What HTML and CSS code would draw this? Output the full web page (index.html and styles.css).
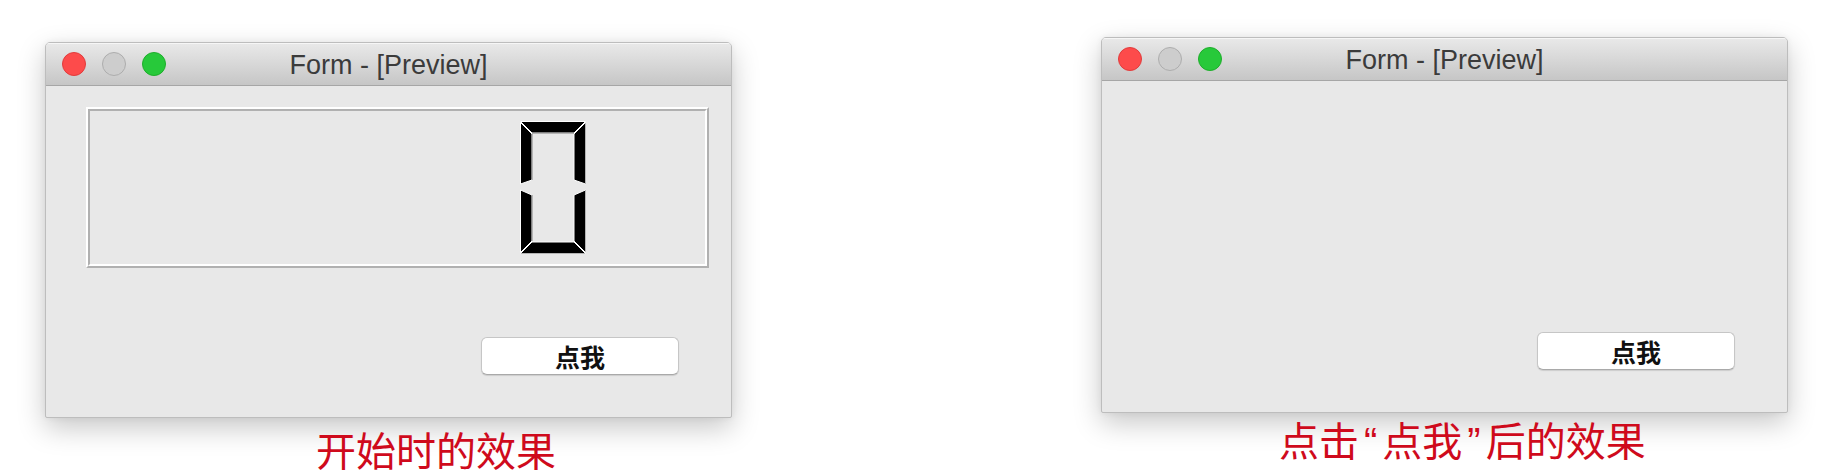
FILE: index.html
```html
<!DOCTYPE html>
<html lang="zh-CN">
<head>
<meta charset="utf-8">
<title>Form - [Preview]</title>
<link rel="stylesheet" href="styles.css">
</head>
<body>
<main class="stage">
  <section class="shot shot-start">
    <div class="window">
      <div class="titlebar">
        <div class="lights">
          <span class="light light-close"></span>
          <span class="light light-min"></span>
          <span class="light light-max"></span>
        </div>
        <div class="title">Form - [Preview]</div>
      </div>
      <div class="content">
        <div class="lcd">
          <div class="lcd-inner">
            <svg class="digit" width="66" height="133" viewBox="0 0 66 133">
              <g fill="#000" stroke="#fff" stroke-width="1" stroke-linejoin="miter">
                <polygon points="0.5,0.5 65.5,0.5 54,12 12,12"/>
                <polygon points="0.5,1.5 12,13 12,59 0.5,63"/>
                <polygon points="65.5,1.5 54,13 54,59 65.5,63"/>
                <polygon points="0.5,69 12,74 12,120 0.5,131.5"/>
                <polygon points="65.5,69 54,74 54,120 65.5,131.5"/>
                <polygon points="0.5,132.5 12,121 54,121 65.5,132.5"/>
              </g>
              <g fill="none" stroke="#b4b4b4" stroke-width="1">
                <line x1="12" y1="12.5" x2="54" y2="12.5"/>
                <line x1="12.5" y1="13" x2="12.5" y2="59"/>
                <line x1="12.5" y1="74" x2="12.5" y2="120"/>
                <line x1="65.5" y1="2" x2="65.5" y2="63"/>
                <line x1="65.5" y1="69" x2="65.5" y2="131"/>
                <line x1="1" y1="132.5" x2="65" y2="132.5"/>
              </g>
            </svg>
          </div>
        </div>
        <button class="btn" type="button">点我</button>
      </div>
    </div>
    <p class="caption">开始时的效果</p>
  </section>

  <section class="shot shot-after">
    <div class="window">
      <div class="titlebar">
        <div class="lights">
          <span class="light light-close"></span>
          <span class="light light-min"></span>
          <span class="light light-max"></span>
        </div>
        <div class="title">Form - [Preview]</div>
      </div>
      <div class="content content-empty">
        <button class="btn" type="button">点我</button>
      </div>
    </div>
    <p class="caption">点击<span class="q">“</span>点我<span class="q">”</span>后的效果</p>
  </section>
</main>
</body>
</html>
```

FILE: styles.css
```css
* { box-sizing: border-box; }

html, body {
  margin: 0;
  padding: 0;
  background: #ffffff;
}

body {
  width: 1834px;
  height: 472px;
  overflow: hidden;
  font-family: "Liberation Sans", "Noto Sans CJK SC", sans-serif;
}

.stage {
  display: flex;
  align-items: flex-start;
  padding-left: 45px;
}

.shot {
  display: flex;
  flex-direction: column;
  align-items: flex-start;
}

.shot-start { margin-top: 42px; }
.shot-after { margin-top: 37px; margin-left: 369px; }

.window {
  width: 687px;
  height: 376px;
  display: flex;
  flex-direction: column;
  background: #e8e8e8;
  border: 1px solid #bdbdbd;
  border-radius: 5px 5px 2px 2px;
  box-shadow: 0 10px 28px rgba(0, 0, 0, 0.22), 0 0 6px rgba(0, 0, 0, 0.06);
  overflow: hidden;
}

.titlebar {
  position: relative;
  height: 43px;
  flex: none;
  display: flex;
  align-items: center;
  justify-content: center;
  background: linear-gradient(#e9e9e9, #d6d6d6 55%, #c6c6c6);
  border-bottom: 1px solid #a6a6a6;
  box-shadow: inset 0 1px 0 #f6f6f6;
}

.lights {
  position: absolute;
  left: 16px;
  top: 9px;
  display: flex;
  gap: 16px;
}

.light {
  width: 24px;
  height: 24px;
  border-radius: 50%;
  display: block;
}

.light-close { background: #fd4b4b; border: 1px solid #e13c3c; }
.light-min   { background: #cdcdcd; border: 1px solid #adadad; }
.light-max   { background: #27c93a; border: 1px solid #1eae2b; }

.title {
  font-size: 27px;
  color: #3b3b3b;
  line-height: 1;
  margin-top: 2px;
}

.content {
  flex: 1;
  display: flex;
  flex-direction: column;
  align-items: flex-start;
  padding: 21px 0 0 40px;
}

.content-empty { padding-top: 251px; }

.lcd {
  width: 623px;
  height: 161px;
  border: 2px solid;
  border-color: #ffffff #b0b0b0 #b0b0b0 #ffffff;
}

.lcd-inner {
  width: 100%;
  height: 100%;
  border: 2px solid;
  border-color: #b0b0b0 #ffffff #ffffff #b0b0b0;
  padding: 10px 0 0 430px;
}

.digit { display: block; }

.btn {
  width: 198px;
  height: 38px;
  margin: 69px 0 0 395px;
  padding: 0;
  background: #ffffff;
  border: 1px solid #c6c6c6;
  border-bottom-color: #a9a9a9;
  border-radius: 6px;
  box-shadow: 0 1px 1px rgba(0, 0, 0, 0.12);
  font-family: "Noto Sans CJK SC", sans-serif;
  font-size: 25px;
  font-weight: 700;
  color: #111111;
  line-height: 1;
}

.content-empty .btn { margin-top: 0; }

.caption {
  margin: 11px 0 0 271px;
  font-family: "Noto Sans CJK SC", sans-serif;
  font-size: 40px;
  line-height: 40px;
  color: #cf0a1c;
  white-space: nowrap;
}

.shot-after .caption { margin: 6px 0 0 178px; }

.q {
  font-family: "Liberation Sans", sans-serif;
  margin: 0 5px;
}
```
